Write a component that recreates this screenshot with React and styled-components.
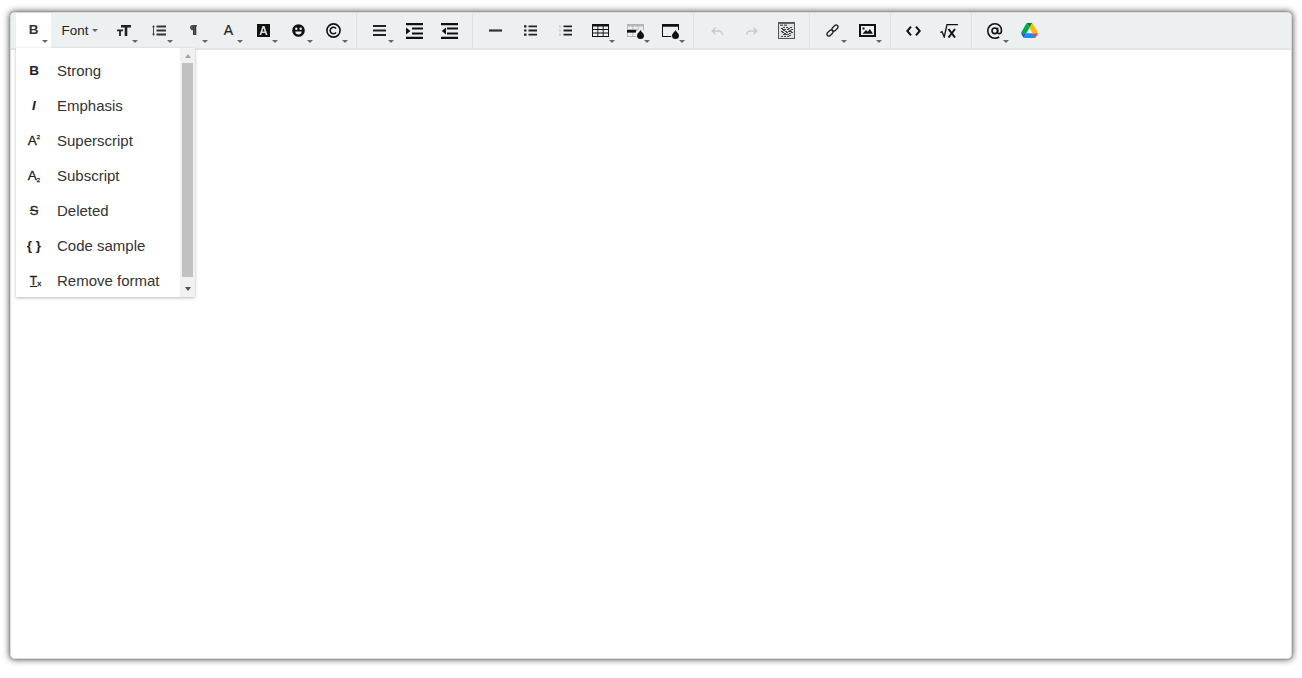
import React from "react";
import styled, { createGlobalStyle } from "styled-components";

const Global = createGlobalStyle`
  html, body { margin: 0; padding: 0; background: #fff; }
  body { font-family: "Liberation Sans", Arial, sans-serif; overflow: hidden; }
`;
const Page = styled.div`
  padding: 12px 10px 0;
  height: 678px;
  box-sizing: border-box;
`;
const Editor = styled.div`
  position: relative;
  height: 647px;
  box-sizing: border-box;
  border: 1px solid #dadada;
  border-radius: 4px;
  background: #fff;
  box-shadow: 0 0 1px #666, 0 0 7px rgba(0, 0, 0, 0.8);
`;
const Toolbar = styled.div`
  display: flex;
  height: 35px;
  box-sizing: content-box;
  background: #ecf0f1;
  border-bottom: 2px solid #e1e5e6;
  border-radius: 3px 3px 0 0;
`;
const Group = styled.div`
  display: flex;
  padding: 0 5px;
  border-right: 1px solid #dee2e3;
  &:last-child { border-right: 0; }
`;
const ToolBtn = styled.div`
  position: relative;
  flex: 0 0 ${(p) => p.$w || 35}px;
  height: ${(p) => (p.$active ? 37 : 35)}px;
  z-index: 1;
  display: flex;
  align-items: center;
  justify-content: center;
  background: ${(p) => (p.$active ? "#fff" : "transparent")};
  color: #222;
`;
const Caret = styled.i`
  position: absolute;
  right: ${(p) => p.$r ?? 3}px;
  top: ${(p) => p.$t ?? 27}px;
  width: 0;
  height: 0;
  border-style: solid;
  border-width: 3px 3px 0;
  border-color: #666 transparent transparent;
`;
const GlyphB = styled.span`
  font-size: 13.5px;
  font-weight: 700;
  color: #333;
  line-height: 1;
  margin-top: -3px;
`;
const GlyphA = styled.span`
  font-size: 14px;
  color: #222;
  line-height: 1;
  -webkit-text-stroke: 0.2px #222;
  margin-top: -1px;
`;
const FontLabel = styled.span`
  font-size: 13.4px;
  color: #222;
  margin-right: 7px;
`;
const Icon = styled.svg`
  display: block;
  flex: none;
  margin-top: ${(p) => p.$dy || 0}px;
`;
const Menu = styled.div`
  position: absolute;
  left: 5px;
  top: 35px;
  z-index: 2;
  width: 179px;
  height: 249px;
  display: flex;
  box-sizing: border-box;
  background: #fff;
  box-shadow: 0 1px 3px rgba(0, 0, 0, 0.28);
  overflow: hidden;
`;
const MenuList = styled.ul`
  flex: 1;
  margin: 0;
  padding: 5px 0 0;
  list-style: none;
`;
const MenuItem = styled.li`
  display: flex;
  align-items: center;
  height: 35px;
  color: #333;
  font-size: 15px;
`;
const ItemIcon = styled.span`
  flex: 0 0 36px;
  margin-right: 5px;
  display: flex;
  align-items: center;
  justify-content: center;
  color: #222;
  font-weight: ${(p) => p.$weight || 700};
  font-size: 13.5px;
  -webkit-text-stroke: ${(p) => (p.$weight ? "0.3px #222" : "0")};
`;
const Italic = styled.span`
  font-style: italic;
`;
const Sup = styled.sup`
  font-size: 6px;
  line-height: 0;
  vertical-align: 6px;
`;
const Sub = styled.sub`
  font-size: 6px;
  line-height: 0;
  vertical-align: -2px;
`;
const Braces = styled.span`
  font-size: 13.5px;
  font-weight: 700;
`;
const Strike = styled.span`
  font-size: 13px;
  text-decoration: line-through;
`;
const TxT = styled.span`
  font-size: 12px;
  text-decoration: underline;
  margin-left: 3px;
`;
const TxX = styled.span`
  font-size: 8px;
  margin-top: 6px;
`;
const Scrollbar = styled.div`
  flex: 0 0 15px;
  box-sizing: border-box;
  display: flex;
  flex-direction: column;
  align-items: center;
  background: #f1f1f1;
`;
const Arrow = styled.i`
  flex: 0 0 ${(p) => (p.$up ? 15 : 20)}px;
  box-sizing: border-box;
  width: 15px;
  padding-top: ${(p) => (p.$up ? 0 : 4)}px;
  display: flex;
  align-items: center;
  justify-content: center;
  &::before {
    content: "";
    border-style: solid;
    border-width: ${(p) => (p.$up ? "0 3.5px 4px" : "4px 3.5px 0")};
    border-color: ${(p) => (p.$up ? "transparent transparent #a3a3a3" : "#505050 transparent transparent")};
  }
`;
const Thumb = styled.div`
  width: 11px;
  flex: 1;
  background: #c1c1c1;
`;

const I = ({ w = 20, h = 20, vb, dy, children }) => (
  <Icon width={w} height={h} viewBox={vb || `0 0 ${w} ${h}`} fill="none" $dy={dy}>{children}</Icon>
);
const C = "#222";

const Size = () => (
  <I w={14} h={11} dy={-1}>
    <path fill={C} d="M4 0h10v2.400h-3.700V11H7.700V2.400H4zM0 4.500h6v1.700H3.900V11H2.100V6.200H0z" />
  </I>
);
const LineH = () => (
  <I w={14} h={11} dy={-1}>
    <path fill="#333" d="M4.500 .6H14v1.800H4.500zM4.500 4.600H14v1.800H4.500zM4.500 8.600H14v1.800H4.500z" />
    <path fill="#444" d="M1.500 0 3 2.200H2v6.600h1L1.500 11 0 8.800h1V2.200H0z" />
  </I>
);
const Para = () => (
  <I w={7} h={10} dy={-1}>
    <path fill="#555" d="M2.200 0H7v1.300H6.200V10H4.800V1.300h-.3V10H3V5.200h-.8C.9 5.200 0 4 0 2.600S.9 0 2.200 0z" />
    <path fill="#222" d="M3 .5h1.500V10H3zM4.800 .5h1.400V10H4.800z" opacity=".6" />
  </I>
);
const BgA = () => (
  <I w={13} h={13}>
    <rect width="13" height="13" fill="#111" />
    <path fill="#ddd" d="M5.500 2h2L10.500 11H8.800L8.100 9H4.900L4.200 11H2.500zM5.400 7.600h2.200L6.500 4.200z" />
  </I>
);
const Emoji = () => (
  <I w={13} h={13}>
    <circle cx="6.500" cy="6.500" r="6.300" fill="#111" />
    <circle cx="4.300" cy="4.700" r="1.200" fill="#ecf0f1" />
    <circle cx="8.700" cy="4.700" r="1.200" fill="#ecf0f1" />
    <path fill="#ecf0f1" d="M3.300 7.400h6.400c0 1.800-1.400 3-3.200 3S3.300 9.200 3.300 7.400z" />
  </I>
);
const Copy = () => (
  <I w={15} h={15}>
    <circle cx="7.500" cy="7.500" r="6.600" stroke="#111" strokeWidth="1.600" />
    <path stroke="#111" strokeWidth="1.500" d="M10 5.700a3.200 3.200 0 1 0 0 3.600" />
  </I>
);
const Align = () => (
  <I w={13} h={11}>
    <path fill="#222" d="M0 0h13v2H0zM0 4.500h13v2H0zM0 9h13v2H0z" />
  </I>
);
const Indent = () => (
  <I w={17} h={16}>
    <path fill="#111" d="M0 0h17v2.200H0zM0 13.800h17v2.200H0zM6 4.500h11v2H6zM6 9.500h11v2H6z" />
    <path fill="#111" d="M0 4.500l4.500 3.500L0 11.500z" />
  </I>
);
const Outdent = () => (
  <I w={17} h={16}>
    <path fill="#111" d="M0 0h17v2.200H0zM0 13.800h17v2.200H0zM6 4.500h11v2H6zM6 9.500h11v2H6z" />
    <path fill="#111" d="M5 4.500v7L.8 8z" />
  </I>
);
const Hr = () => (
  <I w={13} h={3}>
    <rect y=".4" width="13" height="2.200" fill="#333" />
  </I>
);
const Ul = () => (
  <I w={13} h={11}>
    <path fill="#222" d="M0 .3h2.500v2.200H0zM0 4.400h2.500v2.200H0zM0 8.500h2.500v2.200H0zM4.500 .5H13v1.800H4.500zM4.500 4.600H13v1.800H4.500zM4.500 8.700H13v1.800H4.500z" />
  </I>
);
const Ol = () => (
  <I w={13} h={11}>
    <path fill="#bbb" d="M.3 .3h1.400v2.200H.3zM.3 4.400h1.400v2.200H.3zM.3 8.500h1.400v2.200H.3z" />
    <path fill="#222" d="M4.500 .5H13v1.800H4.500zM4.500 4.600H13v1.800H4.500zM4.500 8.700H13v1.800H4.500z" />
  </I>
);
const Table = () => (
  <I w={17} h={13}>
    <path fill="#111" d="M0 0h17v13H0z" />
    <path fill="#ecf0f1" d="M1 2.600h4.400v2.500H1zM6.300 2.600h4.400v2.500H6.300zM11.600 2.600H16v2.500h-4.400zM1 6h4.400v2.500H1zM6.300 6h4.400v2.500H6.300zM11.600 6H16v2.500h-4.400zM1 9.400h4.400V12H1zM6.300 9.400h4.400V12H6.300zM11.600 9.400H16V12h-4.400z" />
  </I>
);
const Drop = ({ x, y }) => (
  <path fill="#111" transform={`translate(${x} ${y})`} d="M3.500 0C4.400 1.900 7 3.600 7 5.400A3.500 3.500 0 0 1 0 5.400C0 3.600 2.600 1.900 3.500 0z" />
);
const TableBg = () => (
  <I w={17} h={15} dy={2}>
    <path fill="#b5b5b5" d="M0 0h17v13H0z" />
    <path fill="#ecf0f1" d="M1 2.400h4.400V5H1zM6.300 2.400h4.400V5H6.300zM11.600 2.400H16V5h-4.400zM1 8.500h4.400V12H1zM6.300 8.500h4.400V12H6.300zM11.600 8.500H16V12h-4.400z" />
    <rect x="0" y="6" width="9" height="2.600" fill="#111" />
    <circle cx="13.500" cy="10" r="5" fill="#ecf0f1" />
    <Drop x={10} y={6} />
  </I>
);
const ColBg = () => (
  <I w={17} h={15} dy={2}>
    <path fill="#111" d="M0 0h17v2.800H0zM0 2.800h1V12h9v1H0zM16 2.800h1V13h-1z" />
    <circle cx="13.500" cy="10" r="5" fill="#ecf0f1" />
    <Drop x={10} y={6} />
  </I>
);
const Undo = () => (
  <I w={12} h={8} dy={1}>
    <path stroke="#c6cbcc" strokeWidth="1.400" d="M11.500 8c0-2.600-1.700-4-4-4H1.500M4.500 .7 1.200 4l3.300 3.300" />
  </I>
);
const Redo = () => (
  <I w={12} h={8} dy={1}>
    <path stroke="#c6cbcc" strokeWidth="1.400" d="M.5 8c0-2.600 1.700-4 4-4h6M7.500 .7 10.800 4 7.500 7.300" />
  </I>
);
const noise = [
  [3, 6], [5, 5], [8, 5], [10, 6], [12, 5], [4, 7], [6, 7], [9, 7], [11, 8], [13, 7],
  [3, 9], [5, 8], [7, 9], [10, 9], [12, 9], [4, 10], [6, 11], [8, 10], [11, 11], [13, 10],
  [7, 12], [9, 12], [5, 12], [11, 13], [3, 14], [6, 14], [9, 14],
];
const Template = () => (
  <I w={17} h={17}>
    <rect x=".5" y=".5" width="16" height="16" fill="#dfe3e4" stroke="#555" />
    <path fill="#666" d="M1 1h15v1H1zM2 2.500h3V4H2zM6 2.500h3V4H6z" />
    {noise.map(([x, y]) => (
      <rect key={`${x}-${y}`} x={x} y={y} width="2" height="1" fill="#444" />
    ))}
  </I>
);
const Link = () => (
  <I w={13} h={13}>
    <g stroke="#222" strokeWidth="1.300" fill="none">
      <rect x="-1.900" y="-3.500" width="3.800" height="7" rx="1.900" transform="translate(9 4) rotate(45)" />
      <rect x="-1.900" y="-3.500" width="3.800" height="7" rx="1.900" transform="translate(4 9) rotate(45)" />
    </g>
  </I>
);
const Image = () => (
  <I w={17} h={13}>
    <rect x="1" y="1" width="15" height="11" stroke="#111" strokeWidth="2" fill="#ecf0f1" />
    <path fill="#111" d="M3.500 9.800 7 6l1.800 1.800L10.800 5 14 9.800zM3.500 3.500h2v2h-2z" />
  </I>
);
const Code = () => (
  <I w={15} h={10}>
    <path stroke="#111" strokeWidth="2" d="M5 .7 1.300 5 5 9.300M10 .7 13.700 5 10 9.300" />
  </I>
);
const Sqrt = () => (
  <I w={18} h={14}>
    <path stroke="#111" strokeWidth="1.300" d="M.3 8.500 2 7.700 4.200 13 7 .7h11" />
    <path stroke="#111" strokeWidth="2" d="M8.500 5l6.500 8.500M15 5l-6.500 8.500" />
  </I>
);
const At = () => (
  <I w={16} h={16}>
    <g stroke="#111" strokeWidth="1.600" fill="none">
      <circle cx="7.800" cy="7.800" r="2.800" />
      <path d="M10.600 4.700v4.600c0 2 3.700 2.100 3.900-1.500.2-4-2.700-7-6.500-7C3.800 .8 .8 4 .8 8s3 7.200 7.200 7.200c1.700 0 3-.4 4.200-1.200" />
    </g>
  </I>
);
const Drive = () => (
  <I w={17} h={15} vb="0 0 87.300 78">
    <path fill="#0066da" d="m6.600 66.850 3.850 6.650c.8 1.400 1.950 2.500 3.300 3.300l13.750-23.800h-27.500c0 1.550.4 3.100 1.200 4.500z" />
    <path fill="#00ac47" d="m43.650 25-13.750-23.800c-1.350.8-2.500 1.900-3.300 3.300l-25.400 44a9.060 9.060 0 0 0 -1.200 4.500h27.500z" />
    <path fill="#ea4335" d="m73.550 76.800c1.350-.8 2.500-1.900 3.300-3.300l1.600-2.750 7.650-13.250c.8-1.400 1.200-2.950 1.200-4.500h-27.502l5.852 11.500z" />
    <path fill="#00832d" d="m43.650 25 13.750-23.800c-1.350-.8-2.900-1.200-4.500-1.200h-18.500c-1.600 0-3.150.45-4.500 1.200z" />
    <path fill="#2684fc" d="m59.800 53h-32.300l-13.750 23.800c1.350.8 2.900 1.200 4.500 1.200h50.800c1.600 0 3.150-.45 4.500-1.200z" />
    <path fill="#ffba00" d="m73.400 26.500-12.700-22c-.8-1.400-1.950-2.500-3.300-3.300l-13.750 23.800 16.150 28h27.450c0-1.550-.4-3.100-1.200-4.500z" />
  </I>
);

const Btn = ({ caret, children, ...r }) => (
  <ToolBtn {...r}>
    {children}
    {caret && <Caret />}
  </ToolBtn>
);

const items = [
  [<span>B</span>, "Strong"],
  [<Italic>I</Italic>, "Emphasis"],
  [<span>A<Sup>2</Sup></span>, "Superscript", 400],
  [<span>A<Sub>2</Sub></span>, "Subscript", 400],
  [<Strike>S</Strike>, "Deleted", 400],
  [<Braces>{"{ }"}</Braces>, "Code sample"],
  [<><TxT>T</TxT><TxX>x</TxX></>, "Remove format", 400],
];

export default function App() {
  return (
    <Page>
      <Global />
      <Editor>
        <Toolbar>
          <Group>
            <Btn caret $active><GlyphB>B</GlyphB></Btn>
            <ToolBtn $w={55}><FontLabel>Font</FontLabel><Caret $r={8} $t={16} /></ToolBtn>
            <Btn caret><Size /></Btn>
            <Btn caret><LineH /></Btn>
            <Btn caret><Para /></Btn>
            <Btn caret><GlyphA>A</GlyphA></Btn>
            <Btn caret><BgA /></Btn>
            <Btn caret><Emoji /></Btn>
            <Btn caret><Copy /></Btn>
          </Group>
          <Group>
            <Btn caret><Align /></Btn>
            <Btn><Indent /></Btn>
            <Btn><Outdent /></Btn>
          </Group>
          <Group>
            <Btn><Hr /></Btn>
            <Btn><Ul /></Btn>
            <Btn><Ol /></Btn>
            <Btn caret><Table /></Btn>
            <Btn caret><TableBg /></Btn>
            <Btn caret><ColBg /></Btn>
          </Group>
          <Group>
            <Btn><Undo /></Btn>
            <Btn><Redo /></Btn>
            <Btn><Template /></Btn>
          </Group>
          <Group>
            <Btn caret><Link /></Btn>
            <Btn caret><Image /></Btn>
          </Group>
          <Group>
            <Btn><Code /></Btn>
            <Btn><Sqrt /></Btn>
          </Group>
          <Group>
            <Btn caret><At /></Btn>
            <Btn><Drive /></Btn>
          </Group>
        </Toolbar>
        <Menu>
          <MenuList>
            {items.map(([icon, label, weight]) => (
              <MenuItem key={label}>
                <ItemIcon $weight={weight}>{icon}</ItemIcon>
                {label}
              </MenuItem>
            ))}
          </MenuList>
          <Scrollbar>
            <Arrow $up />
            <Thumb />
            <Arrow />
          </Scrollbar>
        </Menu>
      </Editor>
    </Page>
  );
}
